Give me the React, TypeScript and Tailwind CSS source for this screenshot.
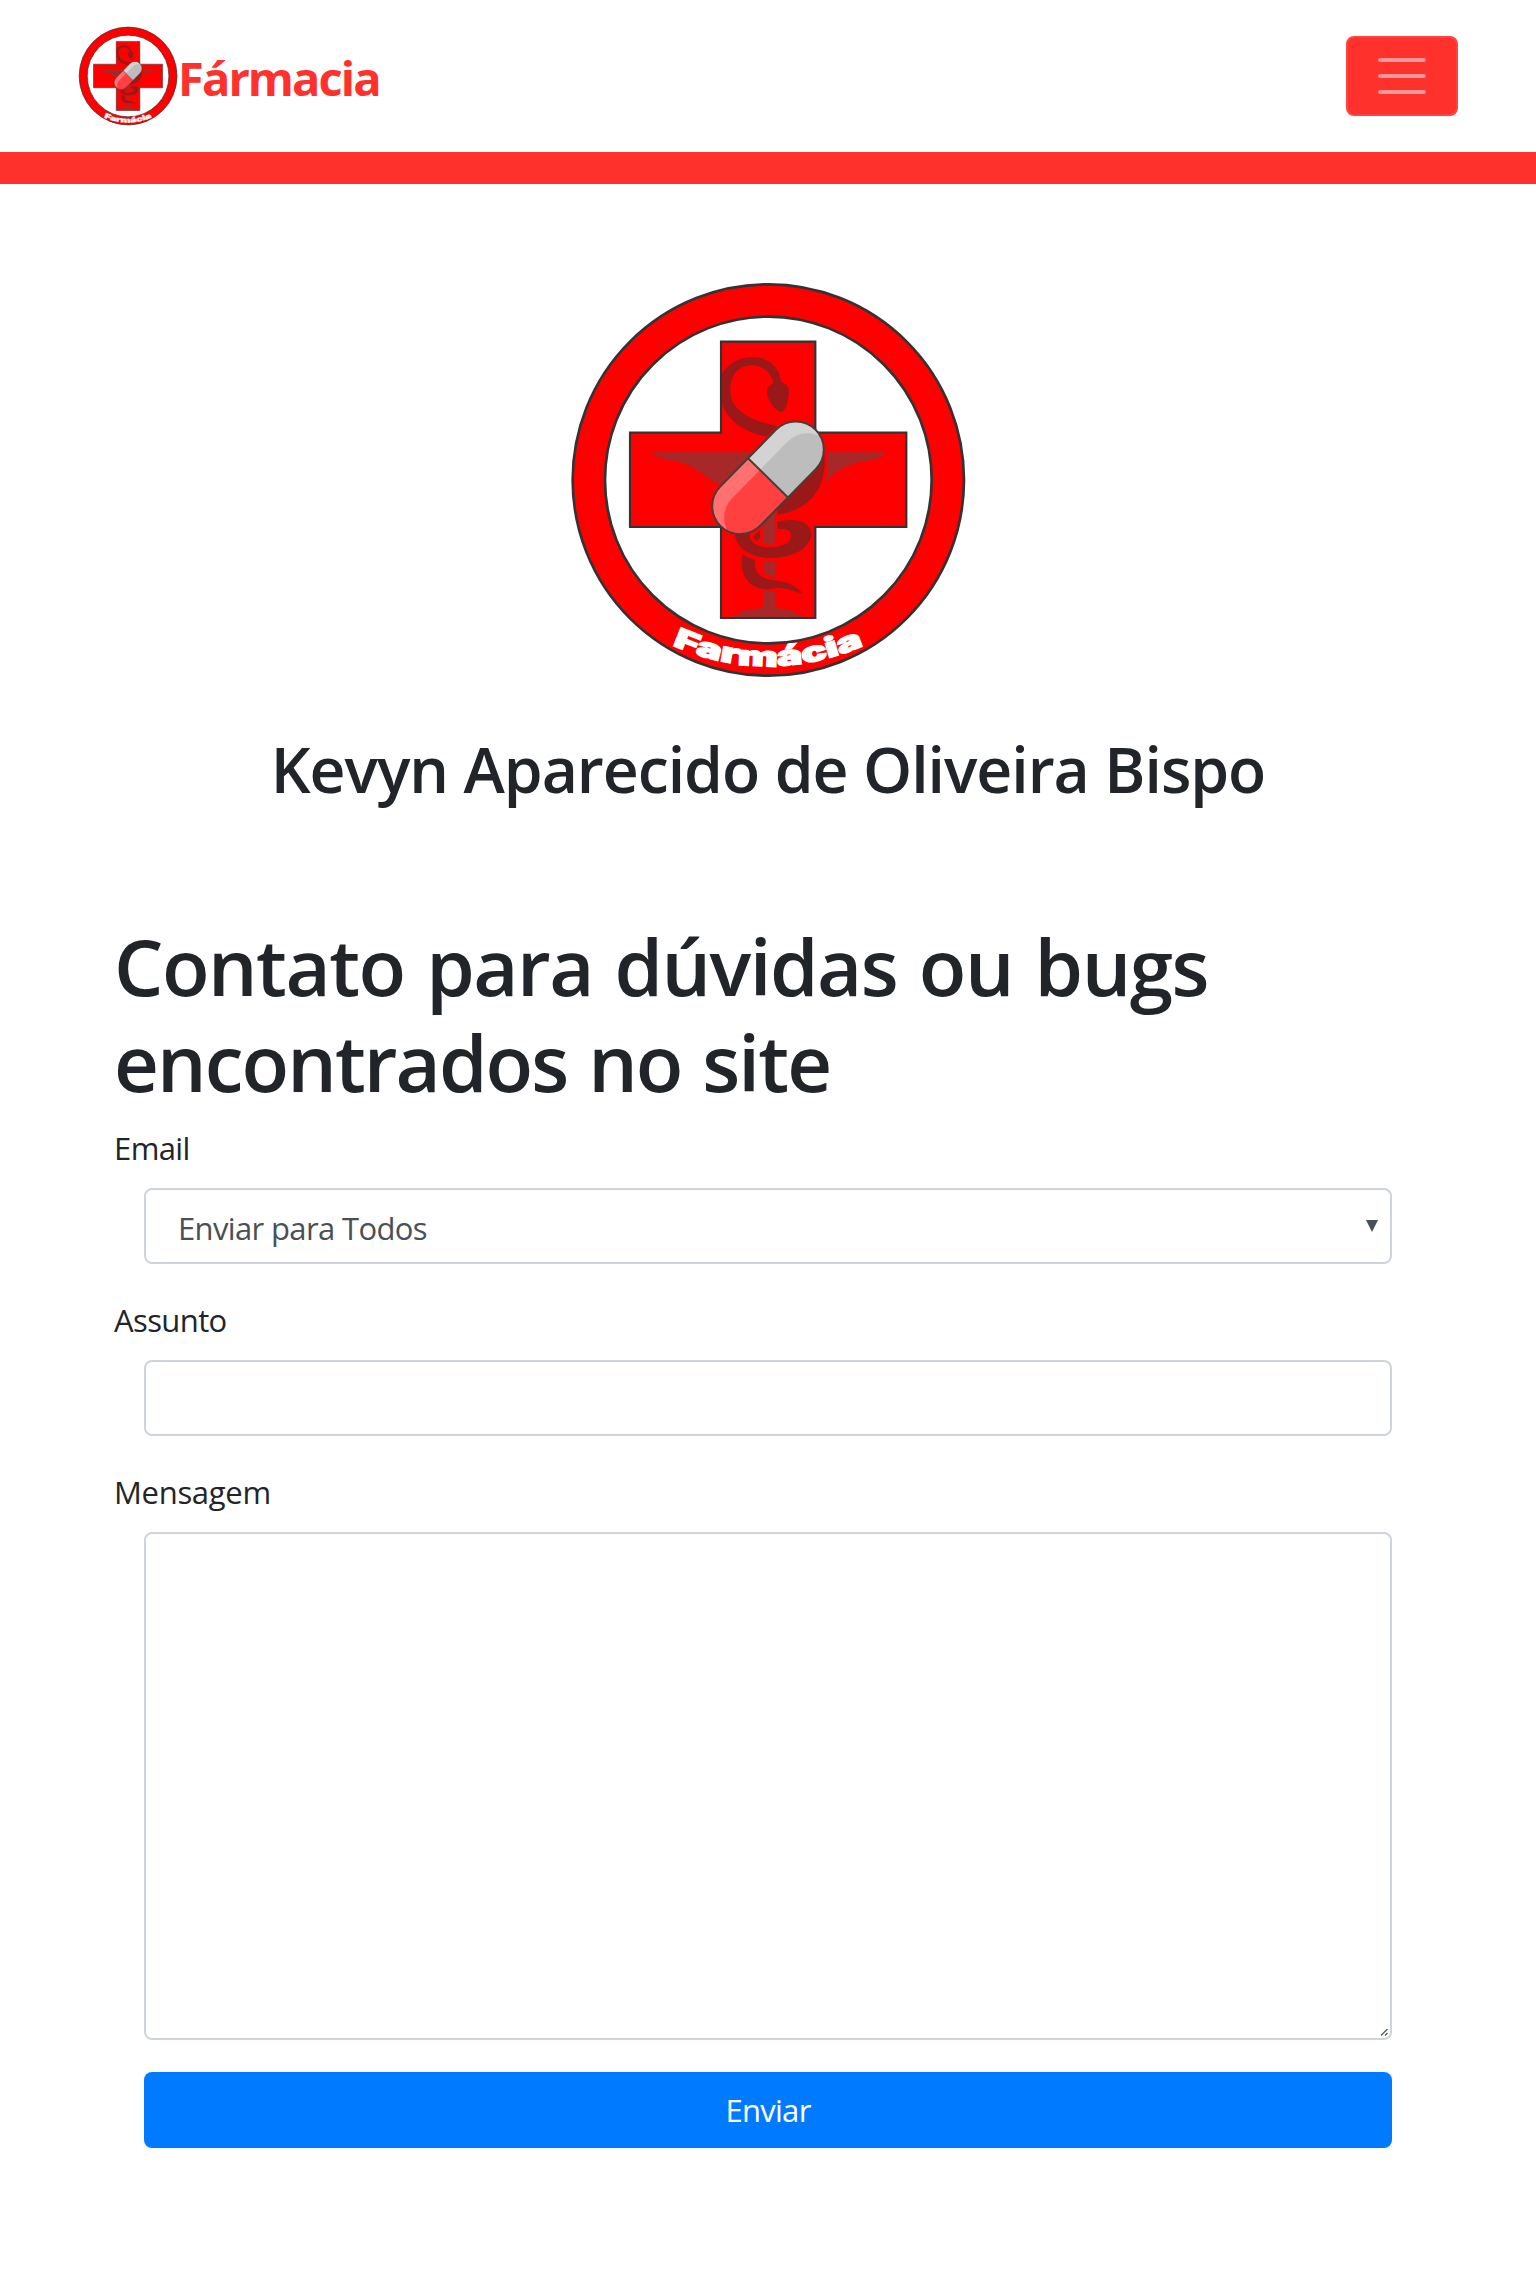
type LogoProps = { className: string; id: string };

function Logo({ className, id }: LogoProps) {
  return (
    <svg className={className} viewBox="24 30 1200 1200" role="img" aria-label="Logo Farmácia">
      <defs>
        <path id={`${id}-arc`} d="M337 1126A693 693 0 0 0 916 1124" />
        <clipPath id={`${id}-pill`}>
          <rect x="-203" y="-84" width="406" height="168" rx="84" />
        </clipPath>
      </defs>
      <circle cx="625" cy="630" r="587" fill="#f00" stroke="#333" strokeWidth="8" />
      <circle cx="625" cy="630" r="490" fill="#fff" stroke="#333" strokeWidth="8" />
      <path
        d="M483 215H766V488H1039V771H766V1044H483V771H210V488H483Z"
        fill="#f00"
        stroke="#333"
        strokeWidth="6.5"
      />
      {/* bowl */}
      <g fill="#a72828">
        <path d="M277 547H575L565 640H470C430 615 390 578 330 569C300 566 285 560 277 547Z" />
        <path d="M803 547H976C965 568 940 568 910 574C860 585 820 605 797 636C803 610 804 580 803 547Z" />
        <path d="M608 720H645V822Q626 825 608 821ZM610 874Q627 877 645 873V922Q625 918 610 907ZM609 961Q627 966 645 963V1008C655 1018 680 1018 695 1022C715 1030 718 1040 740 1041H510C540 1035 540 1025 550 1022C575 1018 600 1018 609 1008Z" />
      </g>
      {/* snake */}
      <g transform="translate(390 150)" fill="#9a1818">
        <path d="M273 184C268 140 235 110 185 111C130 112 95 155 96 165V250C110 300 165 340 230 349L262 318C190 303 121 275 121 212C121 165 145 136 187 136C222 138 245 160 250 190C240 195 228 203 231 220C235 245 258 276 275 276C292 270 297 230 296 205C292 193 280 190 273 184Z" />
        <path d="M403 395C412 490 375 565 262 585L264 560L300 520Z" />
        <path d="M262 606C310 592 362 602 364 640C362 690 300 716 235 714C175 710 135 680 135 640L179 642C180 670 205 682 238 682C285 680 303 665 303 645C300 628 285 625 262 628Z" />
        <path d="M188 651L210 631V655L199 663Z" />
        <path d="M160 703C172 712 180 716 196 719C190 745 203 771 236 778C270 786 300 782 336 817C330 825 300 802 260 804C180 822 147 765 156 710Z" />
      </g>
      {/* pill */}
      <g transform="translate(624 623.5) rotate(-45.5)">
        <g clipPath={`url(#${id}-pill)`}>
          <rect x="-203" y="-84" width="203" height="168" fill="#ff7070" />
          <rect x="0" y="-84" width="203" height="168" fill="#d3d3d3" />
          <path d="M0 -34H-119A84 84 0 0 0 -203 50V132H0Z" fill="#ff4040" />
          <path d="M0 -34H119A84 84 0 0 1 203 50V132H0Z" fill="#bdbdbd" />
        </g>
        <rect x="-203" y="-84" width="406" height="168" rx="84" fill="none" stroke="#4a3c37" strokeWidth="6" />
        <path d="M0 -84V84" stroke="#4a3c37" strokeWidth="6" />
      </g>
      <text className="font-['Inter'] font-black" fontSize="82" fill="#fff" stroke="#fff" strokeWidth="4">
        <textPath href={`#${id}-arc`} textLength="592" lengthAdjust="spacingAndGlyphs">
          Farmácia
        </textPath>
      </text>
    </svg>
  );
}

const label = "mb-4 block text-[31px] leading-[48px]";
const field = "mx-[30px] block w-[1248px] rounded-lg border-2 border-[#ced4da] bg-white";

export default function App() {
  return (
    <div className="min-h-[2276px] bg-white font-['Open_Sans',sans-serif] text-[#212529]">
      <nav className="flex h-[152px] items-center justify-between px-[78px]">
        <a href="#" className="flex items-center text-[#ff312c]">
          <Logo id="brand" className="size-[100px]" />
          <span className="pt-1 text-[47px] leading-[72px] font-bold tracking-[-1.9px]">Fármacia</span>
        </a>
        <button
          type="button"
          aria-label="Menu"
          className="flex h-20 w-28 flex-col items-center justify-center gap-3 rounded-lg border-2 border-[#ff453f] bg-[#ff312c]"
        >
          <span className="h-1 w-12 rounded-full bg-white/50" />
          <span className="h-1 w-12 rounded-full bg-white/50" />
          <span className="h-1 w-12 rounded-full bg-white/50" />
        </button>
      </nav>
      <div className="h-8 bg-[#ff312c]" />

      <header className="flex flex-col items-center pt-24">
        <Logo id="hero" className="size-[400px]" />
        <h2 className="mt-[50px] text-[62.5px] leading-[77px] font-semibold tracking-[-1.05px] [word-spacing:0.4px]">
          Kevyn Aparecido de Oliveira Bispo
        </h2>
      </header>

      <main className="mt-[111px] px-[114px]">
        <h1 className="mb-[14px] text-[78px] leading-[96px] font-semibold">
          <span className="block tracking-[-1.5px] [word-spacing:2.8px]">Contato para dúvidas ou bugs</span>
          <span className="block tracking-[-1.9px] [word-spacing:2.4px]">encontrados no site</span>
        </h1>
        <form>
          <div className="mb-8">
            <label className={`${label} tracking-[-0.6px]`}>Email</label>
            <div className={`${field} flex h-[76px] items-center justify-between pr-3 pl-8 text-[#495057]`}>
              <span className="pt-1 text-[31px] leading-[48px] tracking-[-0.64px]">Enviar para Todos</span>
              <svg className="h-3 w-3" viewBox="0 0 12 12" fill="currentColor">
                <path d="M0 0H12L6 12Z" />
              </svg>
            </div>
          </div>
          <div className="mb-8">
            <label className={`${label} tracking-[-0.6px]`}>Assunto</label>
            <input type="text" className={`${field} h-[76px] px-6 text-[31px]`} />
          </div>
          <div className="mb-8">
            <label className={`${label} tracking-[-0.3px]`}>Mensagem</label>
            <div className={`${field} flex h-[508px] items-end justify-end pr-0.5 pb-0.5`}>
              <svg className="h-[7px] w-[7px]" viewBox="0 0 7 7" fill="none" stroke="#555" strokeWidth="1.3">
                <path d="M0 6.5L6.5 0M4 6.5L6.5 4" />
              </svg>
            </div>
          </div>
          <button
            type="button"
            className="mx-[30px] block h-[76px] w-[1248px] rounded-lg bg-[#007bff] text-[31px] leading-[48px] tracking-[-0.7px] text-white"
          >
            Enviar
          </button>
        </form>
      </main>
    </div>
  );
}
